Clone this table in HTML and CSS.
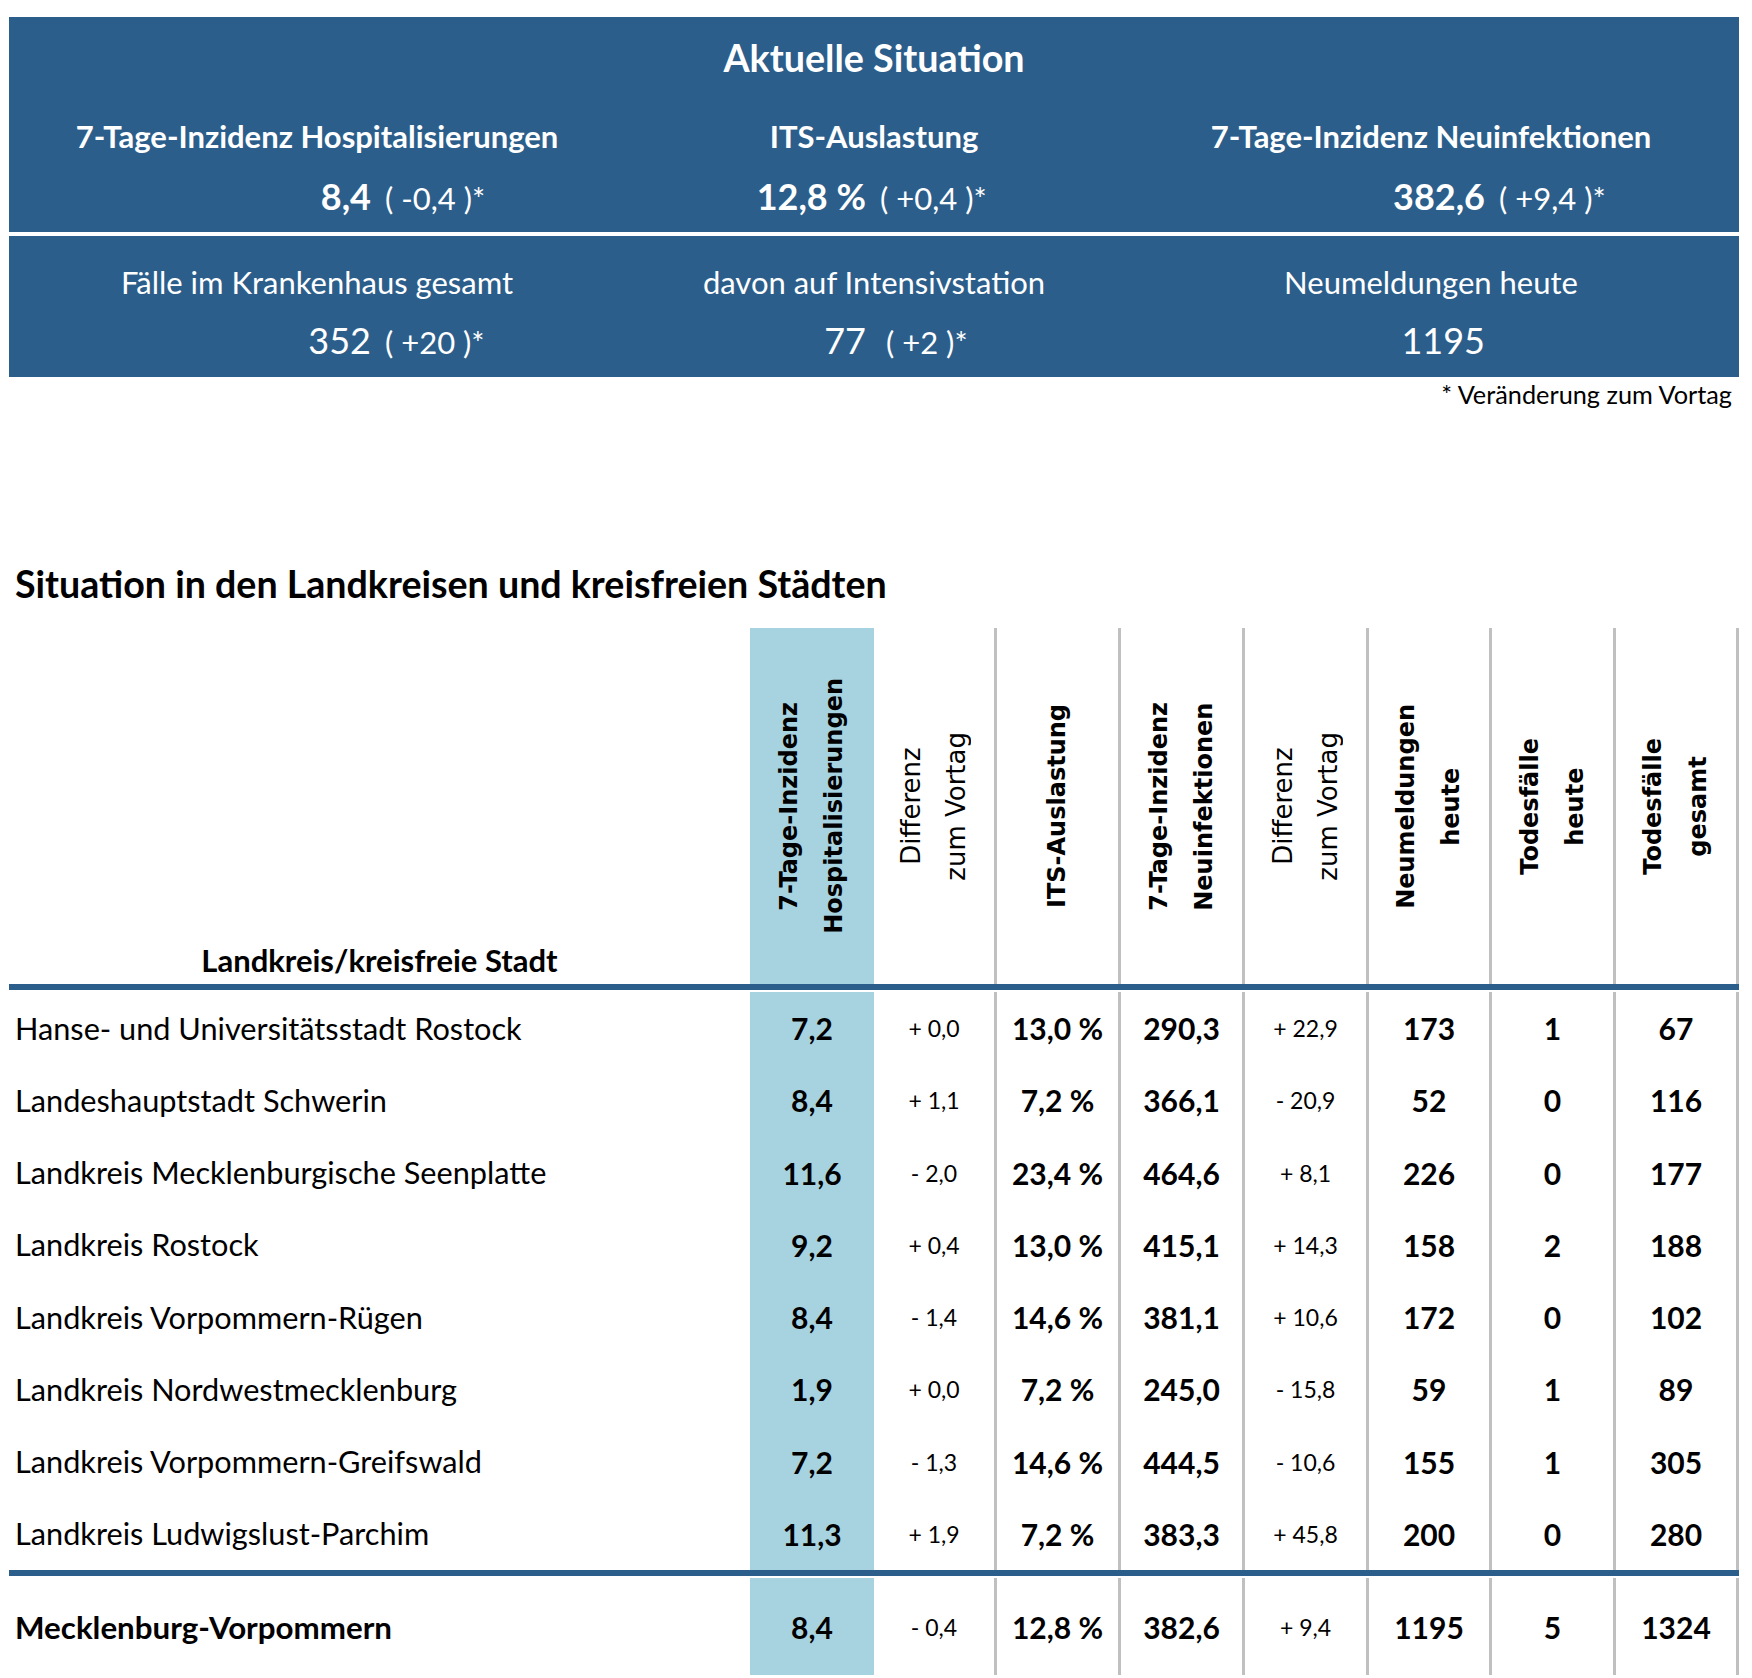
FILE: index.html
```html
<!DOCTYPE html>
<html lang="de">
<head>
<meta charset="utf-8">
<title>Aktuelle Situation</title>
<link rel="stylesheet" href="styles.css">
</head>
<body>
<section class="summary">
  <div class="panel panel-top">
    <h1 class="panel-title">Aktuelle Situation</h1>
    <div class="kpi kpi-wide">
      <div class="kpi-label">7-Tage-Inzidenz Hospitalisierungen</div>
      <div class="kpi-value"><span class="num">8,4</span><span class="delta">( -0,4 )*</span></div>
    </div>
    <div class="kpi kpi-narrow">
      <div class="kpi-label">ITS-Auslastung</div>
      <div class="kpi-value"><span class="num">12,8 %</span><span class="delta">( +0,4 )*</span></div>
    </div>
    <div class="kpi kpi-wide">
      <div class="kpi-label">7-Tage-Inzidenz Neuinfektionen</div>
      <div class="kpi-value"><span class="num">382,6</span><span class="delta">( +9,4 )*</span></div>
    </div>
  </div>
  <div class="panel panel-bottom">
    <div class="kpi kpi-wide">
      <div class="kpi-label">Fälle im Krankenhaus gesamt</div>
      <div class="kpi-value"><span class="num">352</span><span class="delta">( +20 )*</span></div>
    </div>
    <div class="kpi kpi-narrow">
      <div class="kpi-label">davon auf Intensivstation</div>
      <div class="kpi-value"><span class="num">77</span><span class="delta delta-wide">( +2 )*</span></div>
    </div>
    <div class="kpi kpi-wide">
      <div class="kpi-label">Neumeldungen heute</div>
      <div class="kpi-value"><span class="num">1195</span><span class="delta"></span></div>
    </div>
  </div>
  <p class="footnote">* Veränderung zum Vortag</p>
</section>

<section class="districts">
  <h2 class="districts-title">Situation in den Landkreisen und kreisfreien Städten</h2>
  <div class="grid">
    <div class="hcell hname">Landkreis/kreisfreie Stadt</div>
    <div class="hcell hl"><div class="vtext bold">7-Tage-Inzidenz<br>Hospitalisierungen</div></div>
    <div class="hcell ln"><div class="vtext">Differenz<br>zum Vortag</div></div>
    <div class="hcell ln"><div class="vtext bold">ITS-Auslastung</div></div>
    <div class="hcell ln"><div class="vtext bold">7-Tage-Inzidenz<br>Neuinfektionen</div></div>
    <div class="hcell ln"><div class="vtext">Differenz<br>zum Vortag</div></div>
    <div class="hcell ln"><div class="vtext bold">Neumeldungen<br>heute</div></div>
    <div class="hcell ln"><div class="vtext bold">Todesfälle<br>heute</div></div>
    <div class="hcell ln"><div class="vtext bold">Todesfälle<br>gesamt</div></div>

    <div class="rule"></div>

    <div class="cell name">Hanse- und Universitätsstadt Rostock</div>
    <div class="cell hl b">7,2</div><div class="cell ln d">+ 0,0</div><div class="cell ln b">13,0 %</div><div class="cell ln b">290,3</div><div class="cell ln d">+ 22,9</div><div class="cell ln b">173</div><div class="cell ln b">1</div><div class="cell ln b">67</div>

    <div class="cell name">Landeshauptstadt Schwerin</div>
    <div class="cell hl b">8,4</div><div class="cell ln d">+ 1,1</div><div class="cell ln b">7,2 %</div><div class="cell ln b">366,1</div><div class="cell ln d">- 20,9</div><div class="cell ln b">52</div><div class="cell ln b">0</div><div class="cell ln b">116</div>

    <div class="cell name">Landkreis Mecklenburgische Seenplatte</div>
    <div class="cell hl b">11,6</div><div class="cell ln d">- 2,0</div><div class="cell ln b">23,4 %</div><div class="cell ln b">464,6</div><div class="cell ln d">+ 8,1</div><div class="cell ln b">226</div><div class="cell ln b">0</div><div class="cell ln b">177</div>

    <div class="cell name">Landkreis Rostock</div>
    <div class="cell hl b">9,2</div><div class="cell ln d">+ 0,4</div><div class="cell ln b">13,0 %</div><div class="cell ln b">415,1</div><div class="cell ln d">+ 14,3</div><div class="cell ln b">158</div><div class="cell ln b">2</div><div class="cell ln b">188</div>

    <div class="cell name">Landkreis Vorpommern-Rügen</div>
    <div class="cell hl b">8,4</div><div class="cell ln d">- 1,4</div><div class="cell ln b">14,6 %</div><div class="cell ln b">381,1</div><div class="cell ln d">+ 10,6</div><div class="cell ln b">172</div><div class="cell ln b">0</div><div class="cell ln b">102</div>

    <div class="cell name">Landkreis Nordwestmecklenburg</div>
    <div class="cell hl b">1,9</div><div class="cell ln d">+ 0,0</div><div class="cell ln b">7,2 %</div><div class="cell ln b">245,0</div><div class="cell ln d">- 15,8</div><div class="cell ln b">59</div><div class="cell ln b">1</div><div class="cell ln b">89</div>

    <div class="cell name">Landkreis Vorpommern-Greifswald</div>
    <div class="cell hl b">7,2</div><div class="cell ln d">- 1,3</div><div class="cell ln b">14,6 %</div><div class="cell ln b">444,5</div><div class="cell ln d">- 10,6</div><div class="cell ln b">155</div><div class="cell ln b">1</div><div class="cell ln b">305</div>

    <div class="cell name">Landkreis Ludwigslust-Parchim</div>
    <div class="cell hl b">11,3</div><div class="cell ln d">+ 1,9</div><div class="cell ln b">7,2 %</div><div class="cell ln b">383,3</div><div class="cell ln d">+ 45,8</div><div class="cell ln b">200</div><div class="cell ln b">0</div><div class="cell ln b">280</div>

    <div class="rule"></div>

    <div class="cell name total">Mecklenburg-Vorpommern</div>
    <div class="cell hl b">8,4</div><div class="cell ln d">- 0,4</div><div class="cell ln b">12,8 %</div><div class="cell ln b">382,6</div><div class="cell ln d">+ 9,4</div><div class="cell ln b">1195</div><div class="cell ln b">5</div><div class="cell ln b">1324</div>
  </div>
</section>
</body>
</html>
```

FILE: styles.css
```css
* { box-sizing: border-box; margin: 0; padding: 0; }

html, body { background: #ffffff; }

body {
  width: 1752px;
  font-family: Lato, "Liberation Sans", sans-serif;
  color: #000000;
}

/* ---------- summary panels ---------- */
.summary {
  padding: 17px 0 0 9px;
}

.panel {
  width: 1730px;
  background: #2c5e8b;
  color: #ffffff;
  display: grid;
  grid-template-columns: 616px 498px 616px;
}

.panel-top {
  height: 215px;
  grid-template-rows: 82px 120px;
}

.panel-title {
  grid-column: 1 / -1;
  font-size: 37.7px;
  font-weight: 700;
  line-height: 82px;
  text-align: center;
}

.kpi {
  display: grid;
  grid-template-rows: 74px 46px;
}

.kpi-label {
  font-size: 31px;
  font-weight: 700;
  text-align: center;
  line-height: 74px;
}

.kpi-value {
  display: grid;
  align-items: baseline;
  line-height: 46px;
}

.kpi-wide .kpi-value { grid-template-columns: 369px 1fr; }
.kpi-narrow .kpi-value { grid-template-columns: 248px 1fr; }

.num {
  text-align: right;
  padding-right: 7px;
  font-size: 36px;
  font-weight: 700;
}

.delta {
  padding-left: 7px;
  font-size: 31px;
}

.delta-wide { padding-left: 13px; }

.panel-bottom {
  margin-top: 4px;
  height: 141px;
  padding-top: 22px;
}

.panel-bottom .kpi { grid-template-rows: 48px 68px; }
.panel-bottom .kpi-label { font-weight: 400; line-height: 48px; }
.panel-bottom .kpi-value { line-height: 68px; }
.panel-bottom .num { font-weight: 400; }

.footnote {
  width: 1730px;
  text-align: right;
  padding-right: 7px;
  font-size: 25.3px;
  line-height: 34px;
}

/* ---------- district table ---------- */
.districts {
  padding-left: 9px;
}

.districts-title {
  margin-top: 148px;
  padding-left: 6px;
  font-size: 37.6px;
  font-weight: 700;
  line-height: 50px;
}

.grid {
  margin-top: 19px;
  width: 1730px;
  display: grid;
  grid-template-columns: 741px 124px 123px 124px 124px 124px 123px 124px 123px;
  grid-template-rows: 356px 8px repeat(8, 72.25px) 8px 97px;
}

.hcell {
  display: flex;
  align-items: center;
  justify-content: center;
}

.hname {
  align-items: flex-end;
  padding-bottom: 4px;
  font-size: 31px;
  font-weight: 700;
  line-height: 40px;
}

.hl { background: #a7d3e0; }

.ln { border-right: 3px solid #c0c0c0; }

.vtext {
  writing-mode: vertical-rl;
  transform: rotate(180deg);
  text-align: center;
  font-family: "DejaVu Sans", Verdana, sans-serif;
  font-size: 26px;
  line-height: 45px;
  white-space: nowrap;
}

.vtext.bold {
  font-weight: 700;
  font-size: 24px;
}

.rule {
  grid-column: 1 / -1;
  height: 6px;
  background: #2c5e8b;
}

.cell {
  display: flex;
  align-items: center;
  justify-content: center;
  font-size: 30px;
}

.cell.name {
  justify-content: flex-start;
  padding-left: 6px;
  font-size: 30.7px;
}

.cell.total { font-weight: 700; font-size: 31.3px; }

.cell.b { font-weight: 700; }

.cell.d { font-size: 23px; }
```
